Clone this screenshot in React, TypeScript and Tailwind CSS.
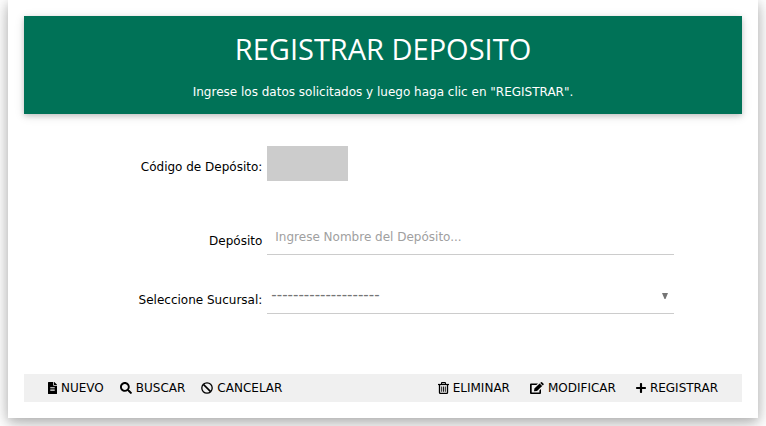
import type { ReactNode } from "react";
import { FaFileAlt, FaSearch, FaPlus } from "react-icons/fa";

function Action({ icon, children }: { icon: ReactNode; children: ReactNode }) {
  return (
    <button type="button" className="flex items-center gap-1 px-2 py-1 leading-5">
      {icon}
      {children}
    </button>
  );
}

function BanIcon() {
  return (
    <svg viewBox="0 0 12 12" className="size-3" fill="none" stroke="currentColor" aria-hidden="true">
      <circle cx="6" cy="6" r="5.2" strokeWidth="1.3" />
      <path d="M2.4 2.4L9.6 9.6" strokeWidth="1.6" />
    </svg>
  );
}

function BinIcon() {
  return (
    <svg viewBox="0 0 11 12" className="h-3 w-[11px]" fill="none" stroke="currentColor" aria-hidden="true">
      <path d="M0 2.5H11" strokeWidth="1.2" />
      <path d="M3.5 2.3V1.2Q3.5 0.6 4.1 0.6H6.9Q7.5 0.6 7.5 1.2V2.3" strokeWidth="1.1" />
      <path d="M1.5 3V10.5Q1.5 11.4 2.4 11.4H8.6Q9.5 11.4 9.5 10.5V3" strokeWidth="1.3" />
      <path d="M3.7 4.5V9.8M5.5 4.5V9.8M7.3 4.5V9.8" strokeWidth="0.9" />
    </svg>
  );
}

function EditIcon() {
  return (
    <svg viewBox="0 0 14 12" className="h-3 w-3.5" fill="currentColor" aria-hidden="true">
      <path d="M8 1.5H1Q0 1.5 0 2.5V11Q0 12 1 12H10Q11 12 11 11V7L9.4 8.6V10.4H1.7V3.1H6.4Z" />
      <path d="M4 9.3L4.4 6.5L9.6 1.5L12.2 4L7 9Z" />
      <path d="M10.2 0.9L11 0.2Q11.5 -0.1 12 0.3L13.6 1.8Q14 2.3 13.5 2.8L12.8 3.4Z" />
    </svg>
  );
}

const row = "flex items-center gap-1";
const label = "w-1/3 shrink-0 pt-1.5 pr-px text-right";
const field = "min-w-0 border-b border-[#cccccc] bg-transparent outline-none";

export default function App() {
  return (
    <main className="mx-2 mb-2 bg-white p-4 font-['DejaVu_Sans',sans-serif] text-xs text-black shadow-[0_4px_10px_rgba(0,0,0,0.2),0_4px_20px_rgba(0,0,0,0.19)]">
      <header className="bg-[#007257] px-4 pt-3 pb-3 text-center text-white shadow-[0_2px_5px_rgba(0,0,0,0.16),0_2px_10px_rgba(0,0,0,0.12)]">
        <h1 className="font-['Open_Sans',sans-serif] text-[29px] leading-[42px]">REGISTRAR DEPOSITO</h1>
        <p className="mt-3 font-medium leading-5">
          Ingrese los datos solicitados y luego haga clic en "REGISTRAR".
        </p>
      </header>

      <form className="pt-8 pb-15">
        <div className={row}>
          <label htmlFor="codigo" className={label}>Código de Depósito:</label>
          <input id="codigo" disabled className="h-[35px] w-[81px] bg-[#cccccc]" />
        </div>
        <div className={`${row} mt-10`}>
          <label htmlFor="deposito" className={label}>Depósito</label>
          <input
            id="deposito"
            placeholder="Ingrese Nombre del Depósito..."
            className={`${field} mr-17 h-[34px] flex-1 px-2 pb-0.5 placeholder:text-[#a0a0a0]`}
          />
        </div>
        <div className={`${row} mt-6`}>
          <label htmlFor="sucursal" className={label}>Seleccione Sucursal:</label>
          <div className="relative mr-17 flex-1">
            <select id="sucursal" className={`${field} block h-[35px] w-full appearance-none px-1 text-[15px] text-[#757575]`}>
              <option>--------------------</option>
            </select>
            <svg viewBox="0 0 6 6" className="pointer-events-none absolute top-3.5 right-1.5 size-1.5" aria-hidden="true">
              <path d="M0 0H6L3.5 6H2.5Z" fill="#757575" />
            </svg>
          </div>
        </div>
      </form>

      <footer className="flex justify-between bg-[#f0f0f0] px-4">
        <div className="flex">
          <Action icon={<FaFileAlt className="h-3 w-[9px]" />}>NUEVO</Action>
          <Action icon={<FaSearch className="size-3" />}>BUSCAR</Action>
          <Action icon={<BanIcon />}>CANCELAR</Action>
        </div>
        <div className="flex gap-1">
          <Action icon={<BinIcon />}>ELIMINAR</Action>
          <Action icon={<EditIcon />}>MODIFICAR</Action>
          <Action icon={<FaPlus className="h-3 w-2.5" />}>REGISTRAR</Action>
        </div>
      </footer>
    </main>
  );
}
